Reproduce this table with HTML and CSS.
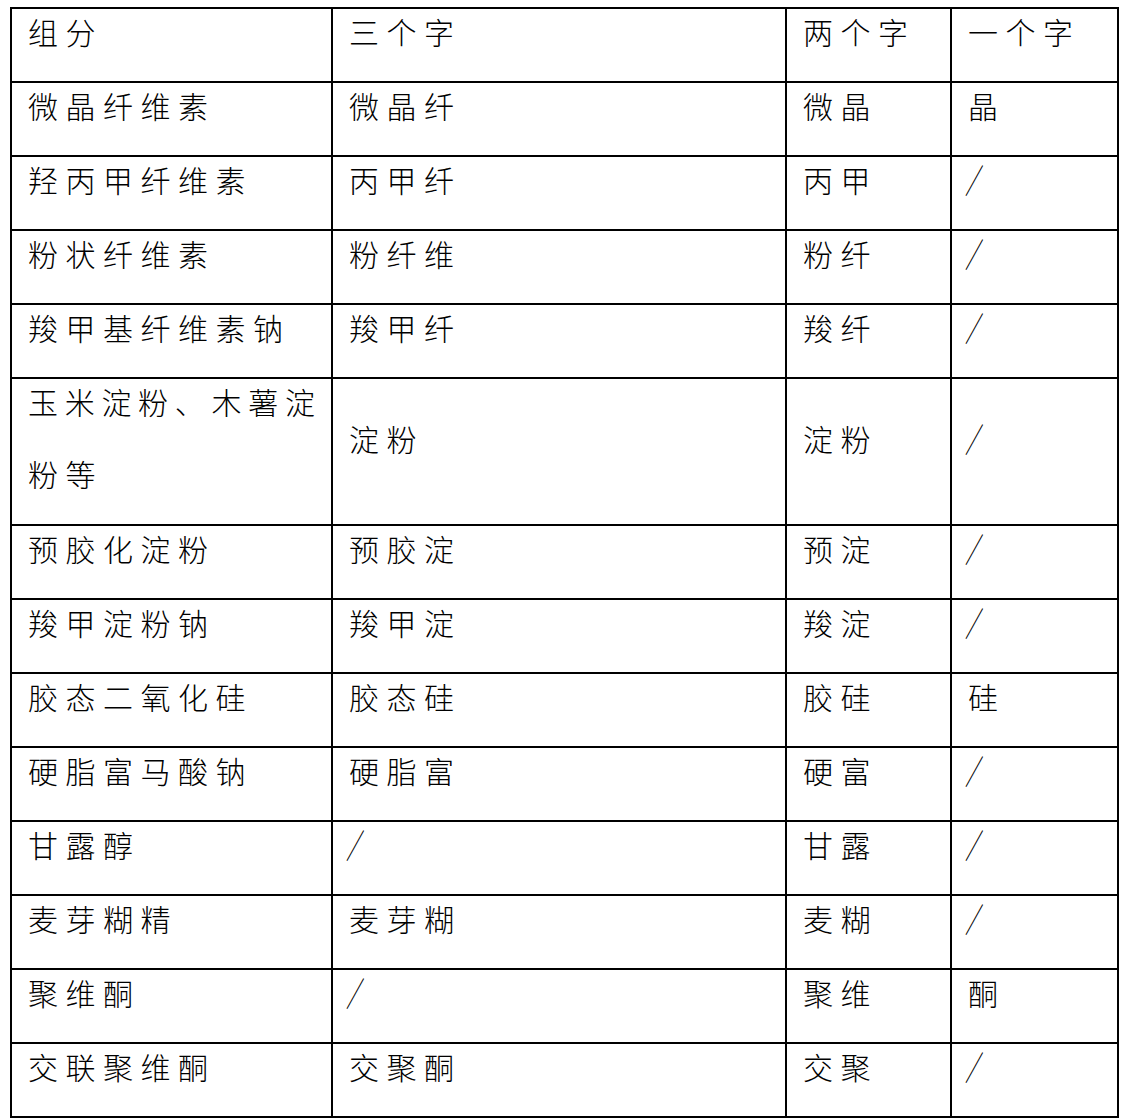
FILE: index.html
```html
<!DOCTYPE html>
<html lang="zh-CN">
<head>
<meta charset="utf-8">
<title>辅料简称</title>
<link rel="stylesheet" href="styles.css">
</head>
<body>
<table class="grid">
  <colgroup>
    <col class="c1"><col class="c2"><col class="c3"><col class="c4">
  </colgroup>
  <tbody>
    <tr><td><span class="ln">组分</span></td><td><span class="ln">三个字</span></td><td><span class="ln">两个字</span></td><td><span class="ln">一个字</span></td></tr>
    <tr><td><span class="ln">微晶纤维素</span></td><td><span class="ln">微晶纤</span></td><td><span class="ln">微晶</span></td><td><span class="ln">晶</span></td></tr>
    <tr><td><span class="ln">羟丙甲纤维素</span></td><td><span class="ln">丙甲纤</span></td><td><span class="ln">丙甲</span></td><td><span class="ln"><span class="sl">／</span></span></td></tr>
    <tr><td><span class="ln">粉状纤维素</span></td><td><span class="ln">粉纤维</span></td><td><span class="ln">粉纤</span></td><td><span class="ln"><span class="sl">／</span></span></td></tr>
    <tr><td><span class="ln">羧甲基纤维素钠</span></td><td><span class="ln">羧甲纤</span></td><td><span class="ln">羧纤</span></td><td><span class="ln"><span class="sl">／</span></span></td></tr>
    <tr class="tall"><td><span class="ln tight">玉米淀粉、木薯淀</span><span class="ln">粉等</span></td><td><span class="ln">淀粉</span></td><td><span class="ln">淀粉</span></td><td><span class="ln"><span class="sl">／</span></span></td></tr>
    <tr><td><span class="ln">预胶化淀粉</span></td><td><span class="ln">预胶淀</span></td><td><span class="ln">预淀</span></td><td><span class="ln"><span class="sl">／</span></span></td></tr>
    <tr><td><span class="ln">羧甲淀粉钠</span></td><td><span class="ln">羧甲淀</span></td><td><span class="ln">羧淀</span></td><td><span class="ln"><span class="sl">／</span></span></td></tr>
    <tr><td><span class="ln">胶态二氧化硅</span></td><td><span class="ln">胶态硅</span></td><td><span class="ln">胶硅</span></td><td><span class="ln">硅</span></td></tr>
    <tr><td><span class="ln">硬脂富马酸钠</span></td><td><span class="ln">硬脂富</span></td><td><span class="ln">硬富</span></td><td><span class="ln"><span class="sl">／</span></span></td></tr>
    <tr><td><span class="ln">甘露醇</span></td><td><span class="ln"><span class="sl">／</span></span></td><td><span class="ln">甘露</span></td><td><span class="ln"><span class="sl">／</span></span></td></tr>
    <tr><td><span class="ln">麦芽糊精</span></td><td><span class="ln">麦芽糊</span></td><td><span class="ln">麦糊</span></td><td><span class="ln"><span class="sl">／</span></span></td></tr>
    <tr><td><span class="ln">聚维酮</span></td><td><span class="ln"><span class="sl">／</span></span></td><td><span class="ln">聚维</span></td><td><span class="ln">酮</span></td></tr>
    <tr><td><span class="ln">交联聚维酮</span></td><td><span class="ln">交聚酮</span></td><td><span class="ln">交聚</span></td><td><span class="ln"><span class="sl">／</span></span></td></tr>
  </tbody>
</table>
</body>
</html>
```

FILE: styles.css
```css
html, body {
  margin: 0;
  padding: 0;
  background: #ffffff;
}

body {
  font-family: "Noto Sans CJK SC", "Noto Sans CJK TC", sans-serif;
  color: #000000;
}

.grid {
  margin: 7px 0 0 10px;
  border-collapse: collapse;
  table-layout: fixed;
  width: 1109px;
}

.c1 { width: 321px; }
.c2 { width: 454px; }
.c3 { width: 165px; }
.c4 { width: 167px; }

.grid td {
  border: 2px solid #000000;
  padding: 0 0 0 16px;
  vertical-align: middle;
  font-size: 30px;
  font-weight: 300;
  letter-spacing: 7.5px;
  white-space: nowrap;
}

.ln {
  display: block;
  height: 44px;
  line-height: 44px;
  margin-bottom: 28px;
}

.tight {
  letter-spacing: 6.7px;
}

.tall .ln + .ln {
  margin-bottom: 29px;
}

.sl {
  display: inline-block;
  margin-left: -3px;
  font-weight: 400;
  transform: scale(0.62, 1.12);
  transform-origin: left center;
}
```
